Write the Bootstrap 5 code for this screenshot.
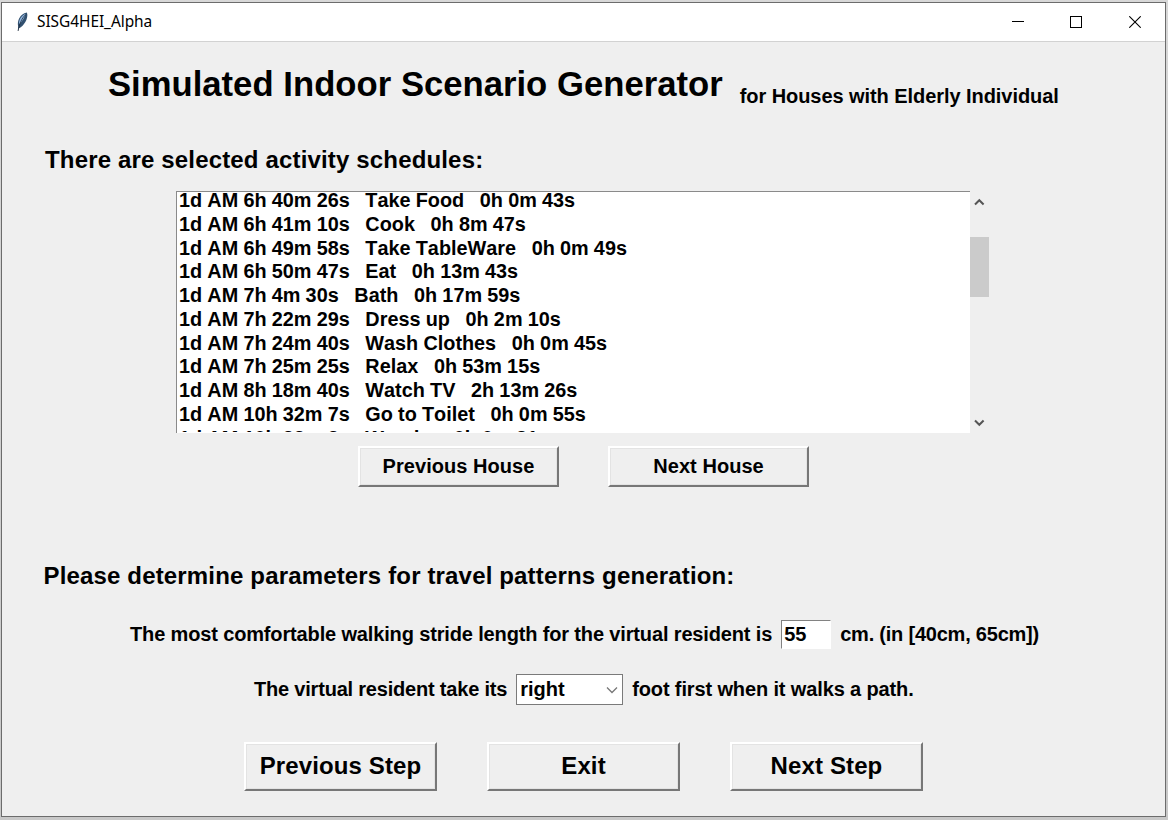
<!DOCTYPE html>
<html lang="en">
<head>
<meta charset="utf-8">
<meta name="viewport" content="width=device-width, initial-scale=1">
<title>SISG4HEI_Alpha</title>
<link href="https://cdn.jsdelivr.net/npm/bootstrap@5.3.0/dist/css/bootstrap.min.css" rel="stylesheet">
<style>
  body { background: #cfcfcf; font-family: "Liberation Sans", Arial, sans-serif; font-weight: 700; color: #000; font-kerning: none; overflow: hidden; }
  .desk { height: 820px; padding: 2px 2px 3px 1px; background: linear-gradient(#d8d8d8, #c8c8c8); }
  .win { border: 1px solid #6c6c6c; background: #efefef; }
  .titlebar { height: 39px; background: #fff; border-bottom: 1px solid #d2d2d2; }
  .feather { margin-left: 13px; margin-right: 8px; }
  .win-name { font: 400 15.45px "Noto Sans", sans-serif; line-height: 36px; padding-bottom: 2px; letter-spacing: -.05px; }
  .win-ctl { gap: 46px; padding-right: 24px; }
  .win-ctl .x-btn { margin-left: 1px; }
  .t-line { white-space: nowrap; line-height: 1; }
  .headline { height: 100px; padding: 25px 0 0 106px; }
  .app-title { font-size: 34.65px; word-spacing: .2px; }
  .app-sub { font-size: 20px; margin-left: 17px; padding-top: 19px; letter-spacing: -.06px; }
  .sect { font-size: 24px; letter-spacing: .16px; }
  .sect-log { margin: 6px 0 0 43px; }
  .sect-par { margin: 77px 0 0 41.5px; }
  .log-area { margin: 19px 0 0 174px; height: 242px; }
  .log-box { width: 794px; background: #fff; border-top: 1px solid #8a8a8a; border-left: 1px solid #8a8a8a; padding: 1px 2px 0; }
  .log-lines { height: 239px; overflow: hidden; font-size: 19.84px; line-height: 23.75px; word-spacing: -.3px; }
  .log-lines div { white-space: pre; }
  .log-lines div:first-child { margin-top: -4px; }
  .scroller { width: 19px; padding: 7px 0 6px; }
  .thumb { height: 60px; background: #cbcbcb; margin-top: 31px; }
  .btn-row { gap: 50px; }
  .tk-btn { border-radius: 0; padding: 0 0 1px; background: #efefef; color: #000; font-weight: 700; line-height: 1;
    border: 2px solid; border-color: #fff #777 #777 #fff; box-shadow: inset 1px 1px #e3e3e3, inset -1px -1px #e3e3e3; }
  .tk-btn.house { width: 201px; height: 41px; font-size: 20px; letter-spacing: .05px; }
  .tk-btn.step { width: 193px; height: 49px; font-size: 24px; letter-spacing: .12px; }
  .params { font-size: 20px; }
  .params > span { padding-bottom: 1px; }
  .p1 { letter-spacing: -.145px; }
  .p2 { letter-spacing: -.22px; }
  .p3 { letter-spacing: -.2px; }
  .p4 { letter-spacing: -.13px; }
  .tk-entry { width: 50px; height: 29px; margin: 0 9px; background: #fff; border: 1px solid; border-color: #828282 #fff #fff #828282; padding: 0 2px 1px; border-radius: 0; font: inherit; color: #000; line-height: 1; }
  .tk-combo { width: 107px; height: 31px; margin: 0 9px; background: #fff; border: 1px solid #7a7a7a; padding: 0 4px 0 3px; }
  .tk-combo span { padding-bottom: 1px; }
</style>
</head>
<body>
<div class="desk">
  <div class="win h-100 d-flex flex-column">
    <header class="titlebar d-flex align-items-center flex-shrink-0">
      <svg class="feather" width="14" height="20" viewBox="0 0 14 20">
        <path d="M2.8 19 3.2 14.6C1.8 9 5 2 11.8.6 13.6 4 11 12 5.4 15.6L4 16.2Z" fill="#31506f"/>
        <path d="M4 12.5C3.5 8 6.5 3.4 10.6 1.8 9.6 5.4 7.6 9 4 12.5Z" fill="#8fb4de"/>
        <path d="M3.2 19C4 12 7 6 10.8 2.5" fill="none" stroke="#14202c" stroke-width=".7"/>
      </svg>
      <span class="win-name">SISG4HEI_Alpha</span>
      <div class="win-ctl d-flex align-items-center ms-auto">
        <svg width="12" height="12" shape-rendering="crispEdges"><path d="M0 5.5H12" stroke="#000"/></svg>
        <svg width="12" height="12" shape-rendering="crispEdges"><rect x=".5" y=".5" width="11" height="11" fill="none" stroke="#000"/></svg>
        <svg class="x-btn" width="12" height="12"><path d="M.3.3 11.7 11.7M11.7.3.3 11.7" stroke="#000" stroke-width="1.1"/></svg>
      </div>
    </header>

    <div class="headline d-flex t-line">
      <div class="app-title">Simulated Indoor Scenario Generator</div>
      <div class="app-sub">for Houses with Elderly Individual</div>
    </div>

    <div class="sect sect-log t-line">There are selected activity schedules:</div>

    <div class="log-area d-flex">
      <div class="log-box">
        <div class="log-lines">
          <div>1d AM 6h 40m 26s   Take Food   0h 0m 43s</div>
          <div>1d AM 6h 41m 10s   Cook   0h 8m 47s</div>
          <div>1d AM 6h 49m 58s   Take TableWare   0h 0m 49s</div>
          <div>1d AM 6h 50m 47s   Eat   0h 13m 43s</div>
          <div>1d AM 7h 4m 30s   Bath   0h 17m 59s</div>
          <div>1d AM 7h 22m 29s   Dress up   0h 2m 10s</div>
          <div>1d AM 7h 24m 40s   Wash Clothes   0h 0m 45s</div>
          <div>1d AM 7h 25m 25s   Relax   0h 53m 15s</div>
          <div>1d AM 8h 18m 40s   Watch TV   2h 13m 26s</div>
          <div>1d AM 10h 32m 7s   Go to Toilet   0h 0m 55s</div>
          <div>1d AM 10h 33m 3s   Wander   0h 0m 21s</div>
        </div>
      </div>
      <div class="scroller d-flex flex-column">
        <svg width="19" height="8" viewBox="0 0 19 8"><path d="M5 6.5 9.3 2.2 13.6 6.5" fill="none" stroke="#555" stroke-width="2"/></svg>
        <div class="thumb"></div>
        <svg class="mt-auto" width="19" height="8" viewBox="0 0 19 8"><path d="M5 1.5 9.3 5.8 13.6 1.5" fill="none" stroke="#555" stroke-width="2"/></svg>
      </div>
    </div>

    <div class="btn-row d-flex" style="margin:13px 0 0 356px;gap:49px">
      <button class="btn tk-btn house">Previous House</button>
      <button class="btn tk-btn house">Next House</button>
    </div>

    <div class="sect sect-par t-line">Please determine parameters for travel patterns generation:</div>

    <div class="params t-line d-flex align-items-center" style="margin:32px 0 0 128px">
      <span class="p1">The most comfortable walking stride length for the virtual resident is</span>
      <input class="tk-entry" value="55">
      <span class="p2">cm. (in [40cm, 65cm])</span>
    </div>

    <div class="params t-line d-flex align-items-center" style="margin:25px 0 0 252px">
      <span class="p3">The virtual resident take its</span>
      <div class="tk-combo d-flex align-items-center justify-content-between">
        <span>right</span>
        <svg width="12" height="8" viewBox="0 0 12 8"><path d="M1 1.5 6 6.5 11 1.5" fill="none" stroke="#777" stroke-width="1.3"/></svg>
      </div>
      <span class="p4">foot first when it walks a path.</span>
    </div>

    <div class="btn-row d-flex" style="margin:37px 0 0 242px">
      <button class="btn tk-btn step">Previous Step</button>
      <button class="btn tk-btn step">Exit</button>
      <button class="btn tk-btn step">Next Step</button>
    </div>
  </div>
</div>
<script src="https://cdn.jsdelivr.net/npm/bootstrap@5.3.0/dist/js/bootstrap.bundle.min.js"></script>
</body>
</html>
